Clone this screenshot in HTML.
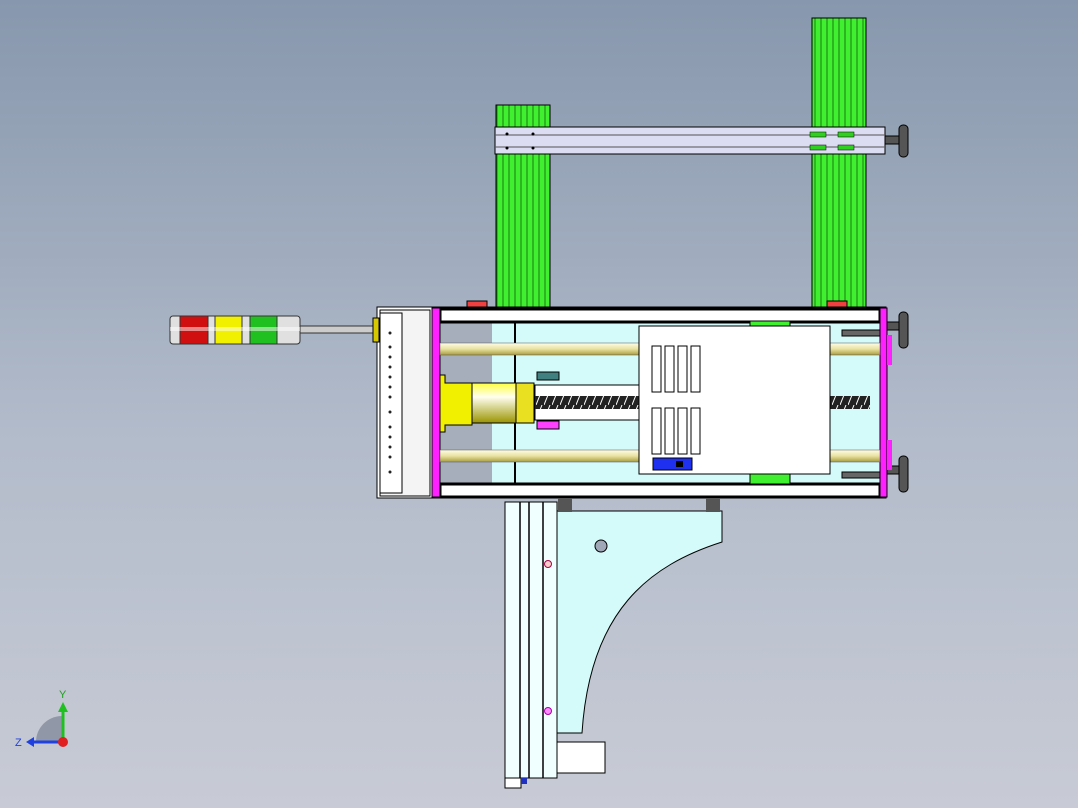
<!DOCTYPE html>
<html><head><meta charset="utf-8"><style>
html,body{margin:0;padding:0;width:1078px;height:808px;overflow:hidden}
body{background:linear-gradient(#8797ad,#b3bccb 55%,#c8cbd5)}
svg{position:absolute;left:0;top:0}
</style></head><body>
<svg width="1078" height="808" viewBox="0 0 1078 808" xmlns="http://www.w3.org/2000/svg">
<defs>
<linearGradient id="rod" x1="0" y1="0" x2="0" y2="1"><stop offset="0" stop-color="#fffde8"/><stop offset="0.5" stop-color="#e8e2a0"/><stop offset="1" stop-color="#a89c40"/></linearGradient>
<linearGradient id="yel" x1="0" y1="0" x2="0" y2="1"><stop offset="0" stop-color="#ffff40"/><stop offset="0.35" stop-color="#fffff0"/><stop offset="1" stop-color="#9a9400"/></linearGradient>
<linearGradient id="grn" x1="0" y1="0" x2="1" y2="0"><stop offset="0" stop-color="#50f040"/><stop offset="1" stop-color="#30c020"/></linearGradient>
<pattern id="fins" width="6" height="10" patternUnits="userSpaceOnUse"><rect width="6" height="10" fill="#40f030"/><line x1="5" y1="0" x2="5" y2="10" stroke="#1a7a10" stroke-width="1"/></pattern>
<pattern id="thr" width="8" height="15" patternUnits="userSpaceOnUse"><rect width="8" height="15" fill="#222"/><line x1="0" y1="15" x2="6" y2="0" stroke="#fff" stroke-width="1"/></pattern>
</defs>
<!-- green columns -->
<rect x="496" y="105" width="54" height="202" fill="url(#fins)" stroke="#000"/>
<rect x="812" y="18" width="54" height="289" fill="url(#fins)" stroke="#000"/>
<!-- top bar -->
<rect x="495" y="127" width="390" height="27" fill="#dcdcf2" stroke="#000"/>
<line x1="495" y1="135" x2="885" y2="135" stroke="#555"/>
<line x1="495" y1="147" x2="885" y2="147" stroke="#555"/>
<rect x="810" y="132" width="16" height="5" fill="#30d020" stroke="#000" stroke-width=".5"/>
<rect x="838" y="132" width="16" height="5" fill="#30d020" stroke="#000" stroke-width=".5"/>
<rect x="810" y="145" width="16" height="5" fill="#30d020" stroke="#000" stroke-width=".5"/>
<rect x="838" y="145" width="16" height="5" fill="#30d020" stroke="#000" stroke-width=".5"/>
<circle cx="507" cy="134" r="1.5"/><circle cx="533" cy="134" r="1.5"/><circle cx="507" cy="148" r="1.5"/><circle cx="533" cy="148" r="1.5"/>
<!-- handles -->
<g fill="#555" stroke="#000">
<rect x="885" y="136" width="14" height="8"/><rect x="899" y="125" width="9" height="32" rx="4"/>
<rect x="885" y="322" width="14" height="8"/><rect x="899" y="312" width="9" height="36" rx="4"/>
<rect x="885" y="466" width="14" height="8"/><rect x="899" y="456" width="9" height="36" rx="4"/>
</g>
<!-- red pads -->
<rect x="467" y="301" width="20" height="7" fill="#f04040" stroke="#000"/>
<rect x="827" y="301" width="20" height="7" fill="#f04040" stroke="#000"/>
<!-- tower light -->
<rect x="300" y="326" width="78" height="7" fill="#ccc" stroke="#333"/>
<rect x="170" y="316" width="130" height="28" rx="3" fill="#e0e0e0" stroke="#333"/>
<rect x="180" y="316" width="28" height="28" fill="#d01010" stroke="#333"/>
<rect x="215" y="316" width="27" height="28" fill="#f0f000" stroke="#333"/>
<rect x="250" y="316" width="27" height="28" fill="#20c020" stroke="#333"/>
<rect x="170" y="327" width="130" height="4" fill="#fff" opacity=".5"/>
<!-- main box -->
<rect x="377" y="307" width="509" height="191" fill="#fff" stroke="#000"/>
<rect x="440" y="322" width="440" height="162" fill="#d4fafa"/>
<rect x="440" y="322" width="52" height="162" fill="#a6aebc"/>
<line x1="515" y1="322" x2="515" y2="484" stroke="#000" stroke-width="2"/>
<rect x="440" y="309" width="440" height="13" fill="#fff" stroke="#000" stroke-width="3"/>
<rect x="440" y="484" width="440" height="13" fill="#fff" stroke="#000" stroke-width="3"/>
<rect x="432" y="308" width="8" height="189" fill="#ff20ff" stroke="#000"/>
<rect x="880" y="308" width="7" height="189" fill="#ff20ff" stroke="#000"/>
<rect x="887" y="335" width="5" height="30" fill="#ff20ff"/><rect x="887" y="440" width="5" height="30" fill="#ff20ff"/>
<!-- end cap -->
<rect x="380" y="310" width="50" height="186" fill="#f4f4f4" stroke="#000"/>
<rect x="380" y="313" width="22" height="180" fill="#fff" stroke="#000"/>
<g fill="#222">
<circle cx="390" cy="333" r="1.5"/><circle cx="390" cy="347" r="1.5"/><circle cx="390" cy="357" r="1.5"/><circle cx="390" cy="367" r="1.5"/><circle cx="390" cy="377" r="1.5"/><circle cx="390" cy="387" r="1.5"/><circle cx="390" cy="397" r="1.5"/><circle cx="390" cy="412" r="1.5"/><circle cx="390" cy="427" r="1.5"/><circle cx="390" cy="437" r="1.5"/><circle cx="390" cy="447" r="1.5"/><circle cx="390" cy="457" r="1.5"/><circle cx="390" cy="472" r="1.5"/>
</g>
<rect x="373" y="318" width="6" height="24" fill="#d8c800" stroke="#000"/>
<!-- rods -->
<rect x="440" y="343" width="440" height="12" fill="url(#rod)" stroke="#555" stroke-width=".5"/>
<rect x="440" y="450" width="440" height="12" fill="url(#rod)" stroke="#555" stroke-width=".5"/>
<!-- screw -->
<rect x="535" y="385" width="104" height="35" fill="#fff" stroke="#000"/>
<rect x="535" y="396" width="104" height="13" fill="url(#thr)"/>
<rect x="830" y="396" width="40" height="13" fill="url(#thr)"/>
<rect x="537" y="372" width="22" height="8" fill="#408080" stroke="#000"/>
<rect x="537" y="421" width="22" height="8" fill="#ff40ff" stroke="#000"/>
<!-- motor -->
<path d="M440 375 H445 V383 H472 V425 H445 V432 H440 Z" fill="#f0f000" stroke="#000"/>
<rect x="472" y="383" width="44" height="40" fill="url(#yel)" stroke="#000"/>
<rect x="516" y="383" width="18" height="40" fill="#e8e020" stroke="#000"/>
<!-- green bits inside -->
<rect x="750" y="321" width="40" height="6" fill="#40f030" stroke="#000"/>
<rect x="750" y="474" width="40" height="10" fill="#40f030" stroke="#000"/>
<rect x="842" y="330" width="38" height="6" fill="#666" stroke="#000"/>
<rect x="842" y="472" width="38" height="6" fill="#666" stroke="#000"/>
<!-- white panel -->
<rect x="639" y="326" width="191" height="148" fill="#fff" stroke="#000"/>
<g fill="#fff" stroke="#000">
<rect x="652" y="346" width="9" height="46"/><rect x="665" y="346" width="9" height="46"/><rect x="678" y="346" width="9" height="46"/><rect x="691" y="346" width="9" height="46"/>
<rect x="652" y="408" width="9" height="46"/><rect x="665" y="408" width="9" height="46"/><rect x="678" y="408" width="9" height="46"/><rect x="691" y="408" width="9" height="46"/>
</g>
<rect x="653" y="458" width="39" height="12" fill="#2030f0" stroke="#000"/>
<rect x="676" y="461" width="7" height="6" fill="#000"/>
<!-- bracket -->
<path d="M557 511 H722 V542 C650 565 590 610 582 733 H557 Z" fill="#d4fafa" stroke="#000"/>
<circle cx="601" cy="546" r="6" fill="#a0a8b8" stroke="#000"/>
<rect x="558" y="498" width="14" height="14" fill="#555"/><rect x="706" y="498" width="14" height="14" fill="#555"/>
<!-- vertical rail -->
<rect x="505" y="502" width="52" height="276" fill="#f0ffff" stroke="#000"/>
<line x1="520" y1="502" x2="520" y2="778" stroke="#000" stroke-width="1.5"/>
<line x1="529" y1="502" x2="529" y2="778" stroke="#000" stroke-width="1.5"/>
<line x1="543" y1="502" x2="543" y2="778" stroke="#000" stroke-width="1.5"/>
<circle cx="548" cy="564" r="3.5" fill="#fcc" stroke="#a04"/>
<circle cx="548" cy="711" r="3.5" fill="#f8f" stroke="#a0a"/>
<rect x="505" y="778" width="16" height="10" fill="#fff" stroke="#000"/>
<rect x="521" y="778" width="6" height="6" fill="#2030c0"/>
<rect x="557" y="742" width="48" height="31" fill="#fff" stroke="#000"/>
<!-- triad -->
<path d="M36 742 A26 26 0 0 1 62 716 V742 Z" fill="#9098a8"/>
<line x1="63" y1="742" x2="63" y2="710" stroke="#20c020" stroke-width="3"/>
<polygon points="58,712 68,712 63,702" fill="#20c020"/>
<line x1="63" y1="742" x2="32" y2="742" stroke="#2040e0" stroke-width="3"/>
<polygon points="34,737 34,747 26,742" fill="#2040e0"/>
<circle cx="63" cy="742" r="5" fill="#e02020"/>
<text x="59" y="698" font-family="Liberation Sans,sans-serif" font-size="11" fill="#20a020">Y</text>
<text x="15" y="746" font-family="Liberation Sans,sans-serif" font-size="11" fill="#2040e0">Z</text>
</svg>
</body></html>
